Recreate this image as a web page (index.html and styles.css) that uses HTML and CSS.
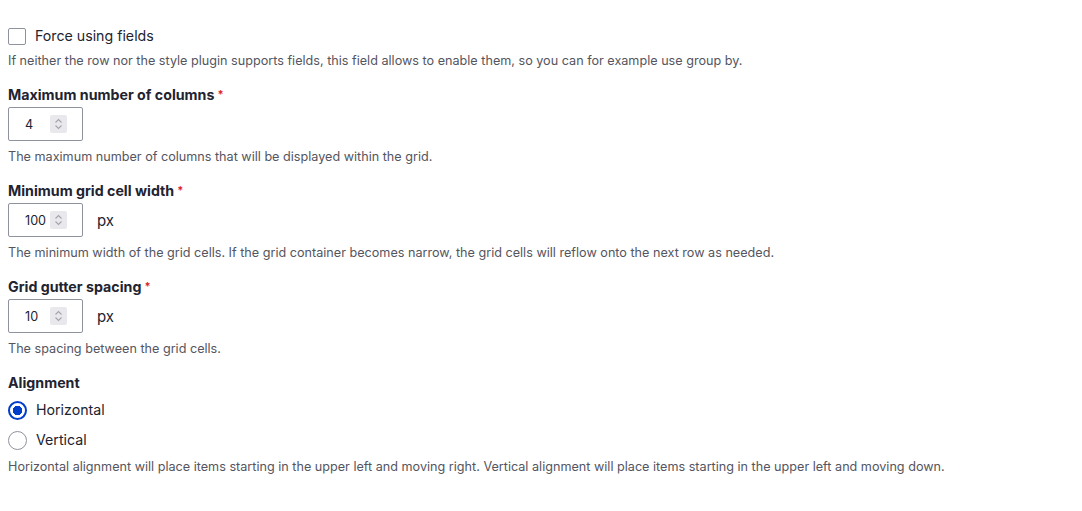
FILE: index.html
```html
<!DOCTYPE html>
<html>
<head>
<meta charset="utf-8">
<link rel="stylesheet" href="styles.css">
</head>
<body>
<form class="form">
  <div class="check-item">
    <label class="option">
      <span class="checkbox"></span>
      <span class="option-text">Force using fields</span>
    </label>
    <div class="desc desc-first">If neither the row nor the style plugin supports fields, this field allows to enable them, so you can for example use group by.</div>
  </div>

  <div class="item">
    <div class="label">Maximum number of columns<span class="req">*</span></div>
    <div class="field">
      <div class="number"><span class="value">4</span><span class="spin"><svg width="17" height="18" viewBox="0 0 17 18"><path d="M5.5 7.5 L8.5 4.5 L11.5 7.5" fill="none" stroke="#a3a4ab" stroke-width="1.1"/><path d="M5.5 10.5 L8.5 13.5 L11.5 10.5" fill="none" stroke="#a3a4ab" stroke-width="1.1"/></svg></span></div>
    </div>
    <div class="desc">The maximum number of columns that will be displayed within the grid.</div>
  </div>

  <div class="item">
    <div class="label">Minimum grid cell width<span class="req">*</span></div>
    <div class="field">
      <div class="number"><span class="value">100</span><span class="spin"><svg width="17" height="18" viewBox="0 0 17 18"><path d="M5.5 7.5 L8.5 4.5 L11.5 7.5" fill="none" stroke="#a3a4ab" stroke-width="1.1"/><path d="M5.5 10.5 L8.5 13.5 L11.5 10.5" fill="none" stroke="#a3a4ab" stroke-width="1.1"/></svg></span></div>
      <span class="suffix">px</span>
    </div>
    <div class="desc">The minimum width of the grid cells. If the grid container becomes narrow, the grid cells will reflow onto the next row as needed.</div>
  </div>

  <div class="item">
    <div class="label">Grid gutter spacing<span class="req">*</span></div>
    <div class="field">
      <div class="number"><span class="value">10</span><span class="spin"><svg width="17" height="18" viewBox="0 0 17 18"><path d="M5.5 7.5 L8.5 4.5 L11.5 7.5" fill="none" stroke="#a3a4ab" stroke-width="1.1"/><path d="M5.5 10.5 L8.5 13.5 L11.5 10.5" fill="none" stroke="#a3a4ab" stroke-width="1.1"/></svg></span></div>
      <span class="suffix">px</span>
    </div>
    <div class="desc">The spacing between the grid cells.</div>
  </div>

  <div class="item">
    <div class="label">Alignment</div>
    <div class="radios">
      <label class="option radio-row">
        <span class="radio checked"></span>
        <span class="option-text">Horizontal</span>
      </label>
      <label class="option radio-row">
        <span class="radio"></span>
        <span class="option-text">Vertical</span>
      </label>
    </div>
    <div class="desc desc-radios">Horizontal alignment will place items starting in the upper left and moving right. Vertical alignment will place items starting in the upper left and moving down.</div>
  </div>
</form>
</body>
</html>
```

FILE: styles.css
```css
html, body {
  margin: 0;
  padding: 0;
  background: #ffffff;
}
body {
  font-family: Inter, "Noto Sans", sans-serif;
  color: #222330;
}
.form {
  padding: 26px 8px 0 8px;
}
.option {
  display: flex;
  align-items: center;
  gap: 9px;
  height: 20px;
  font-size: 14.2px;
  line-height: 20px;
  color: #222330;
}
.checkbox {
  box-sizing: border-box;
  width: 18px;
  height: 17px;
  border: 1px solid #8e929c;
  border-radius: 2px;
  background: #fff;
}
.desc {
  font-size: 12.64px;
  line-height: 18px;
  color: #545560;
  margin-top: 7px;
}
.desc-first {
  margin-top: 6px;
}
.item {
  margin-top: 15px;
}
.label {
  font-size: 14.22px;
  line-height: 20px;
  font-weight: 700;
  color: #222330;
  margin-bottom: 2px;
}
.req {
  color: #dc2323;
  font-size: 11px;
  font-weight: 700;
  margin-left: 3px;
  vertical-align: 2px;
  line-height: 10px;
}
.field {
  display: flex;
  align-items: center;
  gap: 14px;
}
.number {
  box-sizing: border-box;
  width: 75px;
  height: 34px;
  border: 1px solid #8e929c;
  border-radius: 2px;
  display: flex;
  align-items: center;
  padding-left: 16px;
  font-size: 12.64px;
  color: #222330;
}
.value {
  flex: 1;
}
.spin {
  width: 17px;
  height: 18px;
  background: #e9e9ed;
  border-radius: 2px;
  margin-right: 15px;
  display: flex;
}
.suffix {
  font-size: 15px;
  color: #222330;
}
.radios {
  display: flex;
  flex-direction: column;
}
.radio-row {
  height: 30px;
}
.radio {
  box-sizing: border-box;
  width: 19px;
  height: 19px;
  border-radius: 50%;
  border: 1px solid #8e929c;
  background: #fff;
}
.radio.checked {
  border: 2px solid #003ecc;
  background: radial-gradient(circle, #003ecc 0 4.5px, #fff 5px);
}
.desc-radios {
  margin-top: 3px;
}
```
